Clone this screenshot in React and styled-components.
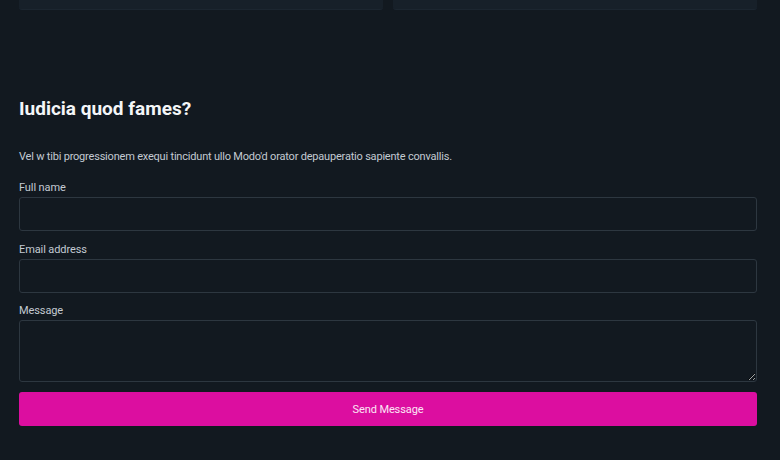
import React from 'react';
import styled, { createGlobalStyle } from 'styled-components';

const GlobalStyle = createGlobalStyle`
  html, body {
    margin: 0;
    padding: 0;
    background: #121920;
  }
  body {
    font-family: Roboto, "Noto Sans", sans-serif;
    color: #c3cad2;
  }
`;

const Page = styled.div`
  width: 780px;
  height: 460px;
  overflow: hidden;
  padding: 0 23px 0 19px;
  box-sizing: border-box;
  background: #121920;
`;

const CardRow = styled.div`
  display: grid;
  grid-template-columns: 1fr 1fr;
  gap: 10px;
  height: 10px;
`;

const Card = styled.div`
  background: #172029;
  border-bottom: 1px solid #1c2630;
  border-radius: 0 0 3px 3px;
`;

const Section = styled.section`
  padding-top: 86px;
`;

const Heading = styled.h2`
  margin: 0;
  font-size: 19px;
  font-weight: 700;
  color: #f4f6f8;
  line-height: 26px;
`;

const Lead = styled.p`
  margin: 27px 0 16px;
  font-size: 11px;
  letter-spacing: -0.2px;
  line-height: 16px;
  color: #c3cad2;
`;

const Form = styled.form`
  display: flex;
  flex-direction: column;
`;

const Field = styled.div`
  display: flex;
  flex-direction: column;
  gap: 2px;
  margin-bottom: ${(p) => p.$gap}px;
`;

const Label = styled.label`
  font-size: 11px;
  letter-spacing: -0.1px;
  line-height: 14px;
  color: #c3cad2;
`;

const Input = styled.input`
  height: 34px;
  box-sizing: border-box;
  background: #121920;
  border: 1px solid #2d3740;
  border-radius: 3px;
  color: #e6edf3;
  font: inherit;
  padding: 0 10px;
  outline: none;
`;

const TextArea = styled.textarea`
  height: 62px;
  box-sizing: border-box;
  background: #121920;
  border: 1px solid #2d3740;
  border-radius: 3px;
  color: #e6edf3;
  font: inherit;
  padding: 6px 10px;
  outline: none;
  resize: vertical;
`;

const Button = styled.button`
  height: 34px;
  border: none;
  border-radius: 3px;
  background: #dc0ea0;
  color: #fbe6f5;
  font-family: inherit;
  font-size: 11px;
  letter-spacing: -0.1px;
  cursor: pointer;
`;

export default function App() {
  return (
    <>
      <GlobalStyle />
      <Page>
        <CardRow>
          <Card />
          <Card />
        </CardRow>
        <Section>
          <Heading>Iudicia quod fames?</Heading>
          <Lead>
            Vel w tibi progressionem exequi tincidunt ullo Modo'd orator depauperatio sapiente convallis.
          </Lead>
          <Form onSubmit={(e) => e.preventDefault()}>
            <Field $gap={12}>
              <Label htmlFor="name">Full name</Label>
              <Input id="name" type="text" />
            </Field>
            <Field $gap={11}>
              <Label htmlFor="email">Email address</Label>
              <Input id="email" type="email" />
            </Field>
            <Field $gap={10}>
              <Label htmlFor="message">Message</Label>
              <TextArea id="message" />
            </Field>
            <Button type="submit">Send Message</Button>
          </Form>
        </Section>
      </Page>
    </>
  );
}
